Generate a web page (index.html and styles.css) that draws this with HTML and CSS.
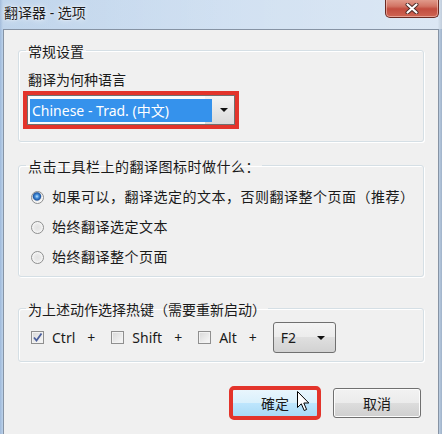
FILE: index.html
```html
<!DOCTYPE html>
<html lang="zh-CN">
<head>
    <meta charset="UTF-8">
    <title>翻译器 - 选项</title>
    <link rel="stylesheet" href="styles.css">
</head>
<body>
    <div class="window">
        <div class="titlebar">
            <span class="title">翻译器 - 选项</span>
            <button class="close" title="关闭">
                <svg width="14" height="11" viewBox="0 0 14 11">
                    <path d="M2.5 1.5 L11.5 9.5 M11.5 1.5 L2.5 9.5" stroke="#4a2a26" stroke-width="4" stroke-linecap="round"/>
                    <path d="M2.5 1.5 L11.5 9.5 M11.5 1.5 L2.5 9.5" stroke="#ffffff" stroke-width="2.2" stroke-linecap="round"/>
                </svg>
            </button>
        </div>

        <div class="client">
            <!-- 常规设置 -->
            <fieldset class="group group-general">
                <legend>常规设置</legend>
                <div class="field-label">翻译为何种语言</div>
                <div class="combo combo-lang marked">
                    <span class="combo-value selected">Chinese - Trad. (中文)</span>
                    <span class="combo-arrow"></span>
                </div>
            </fieldset>

            <!-- 点击图标时的动作 -->
            <fieldset class="group group-action">
                <legend>点击工具栏上的翻译图标时做什么：</legend>
                <label class="radio-row"><span class="radio checked"></span>如果可以，翻译选定的文本，否则翻译整个页面（推荐）</label>
                <label class="radio-row"><span class="radio"></span>始终翻译选定文本</label>
                <label class="radio-row"><span class="radio"></span>始终翻译整个页面</label>
            </fieldset>

            <!-- 热键 -->
            <fieldset class="group group-hotkey">
                <legend>为上述动作选择热键（需要重新启动）</legend>
                <div class="hotkey-row">
                    <label class="check">
                        <span class="checkbox">
                            <svg width="11" height="11" viewBox="0 0 11 11">
                                <path d="M2 5.5 L4.5 8.5 L9.5 1.5" fill="none" stroke="#4b5f9c" stroke-width="1.8"/>
                            </svg>
                        </span>Ctrl
                    </label>
                    <span class="plus">+</span>
                    <label class="check"><span class="checkbox"></span>Shift</label>
                    <span class="plus">+</span>
                    <label class="check"><span class="checkbox"></span>Alt</label>
                    <span class="plus">+</span>
                    <div class="combo combo-key">
                        <span class="combo-value">F2</span>
                        <span class="combo-arrow"></span>
                    </div>
                </div>
            </fieldset>

            <div class="buttons">
                <div class="btn-wrap">
                    <button class="btn btn-ok marked">確定</button>
                    <svg class="cursor" width="13" height="21" viewBox="0 0 13 21">
                        <path d="M0.5 0.5 L0.5 16.5 L4.3 12.8 L7.2 19.5 L9.6 18.5 L6.8 12 L11.8 12 Z" fill="#ffffff" stroke="#000000" stroke-width="1" stroke-linejoin="round"/>
                    </svg>
                </div>
                <button class="btn">取消</button>
            </div>
        </div>
    </div>
</body>
</html>
```

FILE: styles.css
```css
body {
    margin: 0;
    height: 434px;
    overflow: hidden;
    font-family: "Noto Sans", "Noto Sans CJK SC", sans-serif;
    font-size: 14px;
    line-height: 16px;
    color: #1a1a1a;
    background: linear-gradient(90deg, #9fb9da 0, #bcd2ea 3px, #c4d8ee 50%, #c9dbee 99%, #9fb2c9 100%);
}
.window {
    display: flex;
    flex-direction: column;
    height: 434px;
}
.titlebar {
    height: 29px;
    display: flex;
    align-items: flex-start;
    background: linear-gradient(90deg, rgba(255,255,255,0.05), rgba(255,255,255,0.25) 60%, rgba(255,255,255,0.35));
}
.title {
    margin: 5px 0 0 4px;
    color: #1e1e1e;
    text-shadow: 0 0 6px rgba(255,255,255,0.9), 0 0 2px rgba(255,255,255,0.9);
}
.close {
    margin-left: auto;
    margin-right: 3px;
    margin-top: -1px;
    width: 54px;
    height: 19px;
    padding: 0;
    display: flex;
    align-items: center;
    justify-content: center;
    border: 1px solid #6b2a22;
    border-top: none;
    border-radius: 0 0 5px 5px;
    background: linear-gradient(#e3a091 0, #d27565 40%, #c24d3f 55%, #cf6553 100%);
    box-shadow: inset 0 0 0 1px rgba(255,220,210,0.5);
}
.client {
    flex: 1;
    margin: 0 3px;
    padding: 0 14px;
    background-color: #f0f0f0;
    border: 1px solid #8693a4;
    border-bottom: none;
}
.group {
    margin: 0;
    padding: 0;
    min-width: 0;
    border: 1px solid #d5dfe5;
    border-radius: 3px;
    box-shadow: 1px 1px 0 #ffffff, inset 1px 1px 0 #ffffff;
}
.group legend {
    margin-left: 7px;
    padding: 4px 2px 0;
    line-height: 16px;
}
.group-general {
    margin-top: 10px;
    padding-bottom: 16px;
}
.group-action {
    margin-top: 13px;
    padding-bottom: 4px;
    letter-spacing: 0.5px;
}
.group-hotkey {
    margin-top: 21px;
    padding-bottom: 8px;
}
.field-label {
    margin: 12px 0 0 9px;
}

/* 下拉框 */
.combo {
    box-sizing: border-box;
    display: flex;
    align-items: center;
    border: 1px solid #707070;
    border-radius: 3px;
    background: linear-gradient(#f4f4f4 0, #ececec 50%, #dfdfdf 50%, #d2d2d2 100%);
}
.combo-arrow {
    width: 0;
    height: 0;
    border-left: 4px solid transparent;
    border-right: 4px solid transparent;
    border-top: 4px solid #111;
}
.combo-lang {
    width: 208px;
    height: 30px;
    margin: 7px 0 0 8px;
    padding: 2px;
    border-radius: 0;
    background: linear-gradient(90deg, #fbfbfb 0, #fbfbfb 86%, transparent 86%), linear-gradient(#f4f4f4, #dadada);
}
.combo-lang .combo-value {
    width: 182px;
    height: 23px;
    line-height: 23px;
    padding-left: 2px;
    box-sizing: border-box;
}
.combo-lang .combo-arrow {
    margin-left: 8px;
}
.selected {
    background-color: #3592ec;
    color: #ffffff;
}
.marked {
    outline: 4px solid #e3342b;
}
.combo-key {
    width: 63px;
    height: 31px;
    padding: 0 10px 0 7px;
    justify-content: space-between;
}

/* 单选 */
.radio-row {
    display: flex;
    align-items: center;
    gap: 8px;
    height: 30px;
    padding-left: 12px;
}
.radio-row:first-of-type {
    margin-top: 7px;
}
.radio {
    box-sizing: border-box;
    width: 13px;
    height: 13px;
    border: 1px solid #8e8f8f;
    border-radius: 50%;
    background: radial-gradient(circle at 50% 50%, #e2e2e2 0, #e8e8e8 3px, #f7f7f7 5.5px);
}
.radio.checked {
    background: radial-gradient(circle at 45% 40%, #c2e6ff 0, #4a93dd 1.8px, #1f59a6 3.6px, #7d98bd 4.2px, #e6e6e6 4.7px, #f7f7f7 5.5px);
}

/* 热键 */
.hotkey-row {
    display: flex;
    align-items: center;
    margin-top: 4px;
    padding-left: 12px;
}
.check {
    display: flex;
    align-items: center;
    gap: 8px;
}
.checkbox {
    box-sizing: border-box;
    width: 13px;
    height: 13px;
    display: flex;
    align-items: center;
    justify-content: center;
    border: 1px solid #8f8f8f;
    background: linear-gradient(135deg, #d8d8d8, #f9f9f9);
    box-shadow: inset 0 0 0 1px #f2f2f2;
}
.plus {
    margin: 0 16px 0 12px;
}

/* 按钮 */
.buttons {
    display: flex;
    justify-content: flex-end;
    gap: 14px;
    margin-top: 26px;
    padding-right: 3px;
}
.btn-wrap {
    position: relative;
}
.btn {
    width: 88px;
    height: 30px;
    padding: 0;
    font-family: inherit;
    font-size: 14px;
    color: #1a1a1a;
    border: 1px solid #707070;
    border-radius: 3px;
    background: linear-gradient(#f2f2f2 0, #ebebeb 50%, #dddddd 50%, #cfcfcf 100%);
    box-shadow: inset 0 0 0 1px #fcfcfc;
}
.btn-ok {
    display: block;
    border-color: #3c7fb1;
    background: linear-gradient(#eaf6fd 0, #d9f0fc 50%, #bee6fd 50%, #a7d9f5 100%);
    outline-offset: -2px;
}
.cursor {
    position: absolute;
    left: 66px;
    top: 3px;
}
```
